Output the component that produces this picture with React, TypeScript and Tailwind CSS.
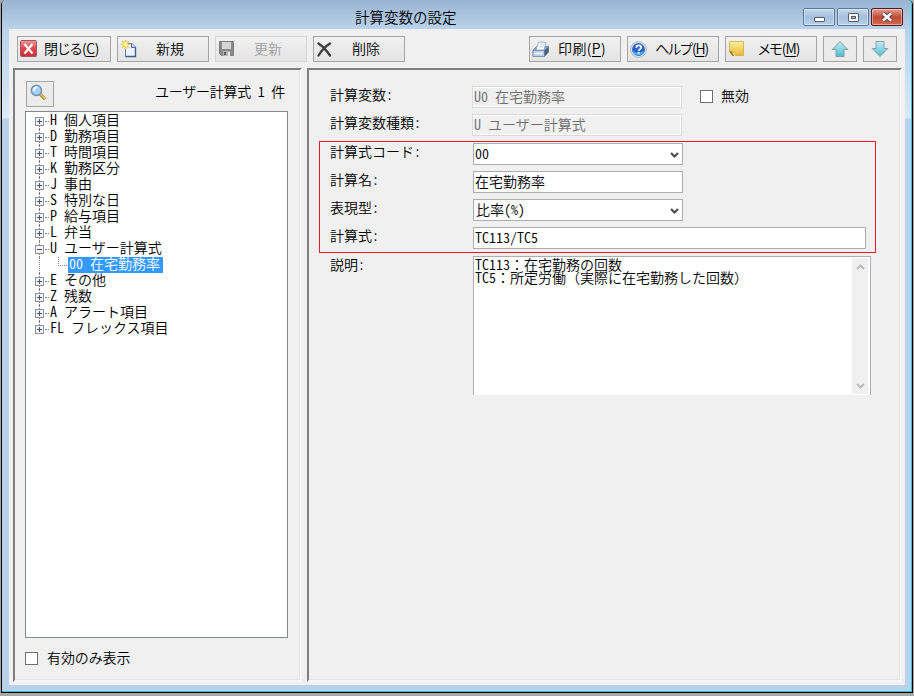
import type { ReactNode } from 'react';
import clsx from 'clsx';

interface TreeNode {
  label: string;
  open?: boolean;
  children?: string[];
}

const tree: TreeNode[] = [
  { label: 'H 個人項目' },
  { label: 'D 勤務項目' },
  { label: 'T 時間項目' },
  { label: 'K 勤務区分' },
  { label: 'J 事由' },
  { label: 'S 特別な日' },
  { label: 'P 給与項目' },
  { label: 'L 弁当' },
  { label: 'U ユーザー計算式', open: true, children: ['00 在宅勤務率'] },
  { label: 'E その他' },
  { label: 'Z 残数' },
  { label: 'A アラート項目' },
  { label: 'FL フレックス項目' },
];

function CloseIcon() {
  return (
    <svg width="18" height="18" viewBox="0 0 18 18">
      <defs>
        <linearGradient id="close" x1="0" y1="0" x2="0" y2="1">
          <stop offset="0" stopColor="#f29a94" />
          <stop offset="0.5" stopColor="#e2454a" />
          <stop offset="1" stopColor="#cf2f3c" />
        </linearGradient>
      </defs>
      <rect x="0.5" y="0.5" width="16" height="16" rx="1" fill="url(#close)" stroke="#9c5a60" />
      <path d="M4.5 4l8 9.5M12.5 4l-8 9.5" stroke="#fff" strokeWidth="2.2" />
    </svg>
  );
}

function NewIcon() {
  return (
    <svg width="18" height="18" viewBox="0 0 18 18">
      <path d="M4.5 3.5h6.500l3.500 3.500v9.500h-10z" fill="#eef4ff" stroke="#5f7cb0" />
      <path d="M10.500 3.500v4h4" fill="#c5d6f2" stroke="#48669f" />
      <path d="M14.500 7.500v9h-10" fill="none" stroke="#3f5c96" strokeWidth="1.400" />
      <path d="M4.500 0v9M0 4.500h9M1.300 1.300l6.400 6.400M7.700 1.300l-6.400 6.400" stroke="#e8c648" strokeWidth="1.500" />
      <circle cx="4.500" cy="4.500" r="2.300" fill="#fff3a0" />
    </svg>
  );
}

function SaveIcon() {
  return (
    <svg width="16" height="16" viewBox="0 0 16 16">
      <path d="M0.500 0.500h14v14h-12l-2-2z" fill="#8b8b8b" stroke="#7c7c7c" />
      <path d="M3 1h9v7h-9z" fill="#d6d6d6" />
      <path d="M4 10h7v5h-7z" fill="#b5b5b5" />
      <path d="M5 11h2v3h-2z" fill="#5f5f5f" />
      <path d="M9 11h2v4h-2z" fill="#e6e6e6" />
    </svg>
  );
}

function DeleteIcon() {
  return (
    <svg width="15" height="15" viewBox="0 0 15 15">
      <path d="M1.500 1.500q6 4 11.500 12M13 1.500q-7 4.500-11.500 12" fill="none" stroke="#3c3c3c" strokeWidth="2.300" strokeLinecap="round" />
    </svg>
  );
}

function PrintIcon() {
  return (
    <svg width="18" height="17" viewBox="0 0 18 17">
      <path d="M1 9l3.500-3.500h9l3-0.500v6l-4 4.500h-11.500z" fill="#8ba6c6" stroke="#6b86a8" strokeWidth="0.800" />
      <path d="M6.500 1l7.500 0.500-2 7.500h-8z" fill="#fafcff" stroke="#8ea0b5" strokeWidth="0.800" />
      <path d="M1 9.500h11.500v6h-11.500z" fill="#b9cee6" stroke="#7690b0" strokeWidth="0.800" />
      <path d="M12.500 9.500l4-4v5.500l-4 4.500z" fill="#46607f" />
      <path d="M2.500 12.500h8" stroke="#f4f8fd" strokeWidth="1.800" />
      <path d="M7.500 3.500h5M6.800 5.500h5" stroke="#b6c6d8" strokeWidth="0.700" />
    </svg>
  );
}

function HelpIcon() {
  return (
    <svg width="17" height="17" viewBox="0 0 17 17">
      <circle cx="8.500" cy="8.500" r="7.900" fill="#e9eef5" stroke="#a4adb8" strokeWidth="0.900" />
      <circle cx="8.500" cy="8.500" r="6.500" fill="#2b63cb" />
      <path d="M2.500 10q6 3 12 0a6.300 6.300 0 0 1-12 0z" fill="#42b2f2" />
      <path d="M6.200 6.800q0-2.500 2.500-2.500t2.500 2q0 1.200-1.300 1.900-1.100 0.600-1.100 1.800" fill="none" stroke="#fff" strokeWidth="1.700" />
      <circle cx="8.700" cy="12" r="1.100" fill="#fff" />
    </svg>
  );
}

function MemoIcon() {
  return (
    <svg width="16" height="16" viewBox="0 0 16 16">
      <defs>
        <linearGradient id="memo" x1="0" y1="0" x2="0" y2="1">
          <stop offset="0" stopColor="#fff09a" />
          <stop offset="1" stopColor="#e8b63a" />
        </linearGradient>
      </defs>
      <path d="M0.500 0.500h14v14h-11l-3-4z" fill="url(#memo)" stroke="#d6ac3c" strokeWidth="0.800" />
      <path d="M0.500 10.500l4-0.500 0.500 5h-1.500z" fill="#a8731c" />
      <path d="M4 10q-0.500 3.500 2 5" fill="none" stroke="#fff0a8" />
    </svg>
  );
}

function ArrowIcon({ down }: { down?: boolean }) {
  return (
    <svg width="18" height="18" viewBox="0 0 18 18" className={clsx(down && 'rotate-180')}>
      <defs>
        <linearGradient id={down ? 'arrow-down' : 'arrow-up'} x1="0" y1="0" x2="0" y2="1">
          <stop offset="0" stopColor={down ? '#4fbcd3' : '#c5eef4'} />
          <stop offset="1" stopColor={down ? '#c5eef4' : '#4fbcd3'} />
        </linearGradient>
      </defs>
      <path
        d="M9 1.500l7.800 8h-3.800v7h-8v-7h-3.800z"
        fill={down ? 'url(#arrow-down)' : 'url(#arrow-up)'}
        stroke="#859ea5"
        strokeLinejoin="round"
      />
    </svg>
  );
}

function SearchIcon() {
  return (
    <svg width="17" height="17" viewBox="0 0 18 18" className="mr-1 mb-1">
      <path d="M10.500 10.500l4.500 4.500" stroke="#8c7a4c" strokeWidth="3.400" strokeLinecap="round" />
      <path d="M11.500 11l3.800 3.800" stroke="#efc040" strokeWidth="2.200" strokeLinecap="round" />
      <circle cx="6.800" cy="6.800" r="5.400" fill="#a4d2f6" stroke="#6f8fb4" strokeWidth="1.500" />
      <path d="M3.800 7q0.500-3.500 4-4" fill="none" stroke="#fff" strokeWidth="2" />
    </svg>
  );
}

function Chevron({ up, className }: { up?: boolean; className?: string }) {
  return (
    <svg width="9" height="7" viewBox="0 0 9 7" className={clsx(up && 'rotate-180', className)}>
      <path d="M1 1l3.500 3.500L8 1" fill="none" stroke="currentColor" strokeWidth="2.200" />
    </svg>
  );
}

interface ToolButtonProps {
  icon: ReactNode;
  label: string;
  accessKey?: string;
  disabled?: boolean;
  className: string;
  labelClass: string;
}

function ToolButton({ icon, label, accessKey, disabled, className, labelClass }: ToolButtonProps) {
  return (
    <button
      className={clsx(
        'flex h-[26px] shrink-0 items-center border bg-linear-to-b from-[#f1f1f1] to-[#e4e4e4] text-[14px] whitespace-nowrap',
        disabled ? 'border-[#d5d5d5] text-[#a0a0a0]' : 'border-[#a5a5a5]',
        className,
      )}
    >
      <span className="flex w-[18px] shrink-0 justify-start">{icon}</span>
      <span className={clsx("pb-[3px] leading-none [font-feature-settings:'palt']", labelClass)}>
        {label}
        {accessKey && (
          <>
            (<span className="underline underline-offset-2">{accessKey}</span>)
          </>
        )}
      </span>
    </button>
  );
}

function Expander({ open }: { open?: boolean }) {
  return (
    <svg width="9" height="9" viewBox="0 0 9 9" shapeRendering="crispEdges">
      <rect x="0.500" y="0.500" width="8" height="8" fill="#f4f4f4" stroke="#919191" />
      <path d={open ? 'M2 4.500h5' : 'M2 4.500h5M4.500 2v5'} stroke="#3b56a0" />
    </svg>
  );
}

function TreeRow({ node, first, last }: { node: TreeNode; first?: boolean; last?: boolean }) {
  return (
    <>
      <li className="flex h-4 items-start">
        <div className="flex w-[9px] shrink-0 flex-col items-center">
          <span className={clsx('h-1 border-l border-dotted', first ? 'border-transparent' : 'border-[#808080]')} />
          <Expander open={node.open} />
          <span className={clsx('h-[3px] border-l border-dotted', last ? 'border-transparent' : 'border-[#808080]')} />
        </div>
        <span className="mt-2 ml-px w-[4px] border-t border-dotted border-[#808080]" />
        <span className="ml-px leading-[13px] whitespace-pre">{node.label}</span>
      </li>
      {node.children?.map((child) => (
        <li key={child} className="flex h-4">
          <span className="ml-1 w-[19px] border-l border-dotted border-[#808080]" />
          <span className="mr-[1px] h-[9px] w-[9px] border-b border-l border-dotted border-[#808080]" />
          <span className="w-[95px] bg-[#3399ff] pl-px leading-[13px] whitespace-pre text-white">{child}</span>
        </li>
      ))}
    </>
  );
}

function Checkbox() {
  return <span className="size-[13px] shrink-0 border border-[#707070] bg-white" />;
}

function FormRow({ label, children }: { label: string; children: ReactNode }) {
  return (
    <div className="flex h-[22px]">
      <span className="w-[143px] shrink-0 leading-[17px] whitespace-pre">{label}</span>
      {children}
    </div>
  );
}

function Field({ value, variant = 'text', wide }: { value: string; variant?: 'text' | 'select' | 'disabled'; wide?: boolean }) {
  return (
    <div
      className={clsx(
        'flex items-start justify-between border pl-px leading-[18px] whitespace-pre',
        wide ? 'w-[393px]' : 'w-[210px]',
        variant === 'disabled'
          ? '-ml-px border-[#d9d9d9] text-[#6d6d6d] shadow-[inset_0_0_0_1px_#fff]'
          : 'border-[#abadb3] bg-white',
      )}
    >
      <span className={clsx(variant === 'select' && value !== '00' && 'pl-px')}>{value}</span>
      {variant === 'select' && <Chevron className="mt-2 mr-[3px] text-[#505050]" />}
    </div>
  );
}

const windowButton = 'flex h-[18px] w-8 items-center justify-center rounded-[2px] border shadow-[inset_0_0_0_1px_#ffffff66]';
const panel =
  'border-2 border-t-[#808080] border-l-[#808080] border-r-[#f7f7f7] border-b-[#f7f7f7] shadow-[inset_-1px_-1px_0_#e3e3e3]';

export default function App() {
  return (
    <div className="flex h-[696px] w-[914px] bg-[#a8a8a8] px-px pb-[3px] font-['Noto_Sans_CJK_JP',sans-serif] text-[14px] [font-weight:350] text-black">
      <div className="flex w-full flex-col rounded-t-[5px] border-x border-b border-black bg-[#b9d1ea]">
        <div className="flex flex-1 flex-col rounded-t-[4px] border-r border-b border-[#35c0dc] bg-[linear-gradient(#99b4d1,#b9d1ea_28px,#dce9f6_118px,#b9d1ea_119px)]">
          <header className="flex h-[29px] shrink-0 items-start justify-end pr-2">
            <h1 className="flex-1 pt-[5px] pl-[353px] text-[14.5px] leading-6">計算変数の設定</h1>
            <div className="flex gap-0.5 pt-2">
              <button className={clsx(windowButton, 'border-[#5c7896] bg-linear-to-b from-[#c4d7eb] via-[#a5c0dd] via-50% to-[#b9d1ea]')}>
                <span className="mt-1 h-[5px] w-[11px] rounded-[1px] border border-[#555b68] bg-white" />
              </button>
              <button className={clsx(windowButton, 'border-[#5c7896] bg-linear-to-b from-[#c4d7eb] via-[#a5c0dd] via-50% to-[#b9d1ea]')}>
                <svg width="11" height="9" viewBox="0 0 11 9">
                  <rect x="0.500" y="0.500" width="10" height="8" rx="0.500" fill="#fff" stroke="#555b68" />
                  <rect x="3.500" y="3.500" width="4" height="2" fill="#a5c0dd" stroke="#555b68" />
                </svg>
              </button>
              <button className={clsx(windowButton, 'border-[#5c1820] bg-linear-to-b from-[#e3a093] via-[#c14a35] via-50% to-[#cf6a4e]')}>
                <svg width="12" height="10" viewBox="0 0 12 10">
                  <path d="M2 1.500l8 7M10 1.500l-8 7" stroke="#55404a" strokeWidth="4.400" />
                  <path d="M2 1.500l8 7M10 1.500l-8 7" stroke="#fff" strokeWidth="2.400" />
                </svg>
              </button>
            </div>
          </header>

          <main className="mr-1.5 mb-1.5 ml-[7px] flex flex-1 flex-col bg-[#f0f0f0]">
            <div className="flex gap-1.5 pt-[7px] pl-2">
              <ToolButton icon={<CloseIcon />} label="閉じる" accessKey="C" className="w-[94px] pl-0.5" labelClass="ml-[6px] tracking-[-0.3px]" />
              <ToolButton icon={<NewIcon />} label="新規" className="w-[92px] pl-[3px]" labelClass="ml-[17px]" />
              <ToolButton icon={<SaveIcon />} label="更新" disabled className="w-[92px] pl-[3px]" labelClass="ml-[17px]" />
              <ToolButton icon={<DeleteIcon />} label="削除" className="mr-[118px] w-[92px] pl-[3px]" labelClass="ml-[17px]" />
              <ToolButton icon={<PrintIcon />} label="印刷" accessKey="P" className="w-[92px] pl-0.5" labelClass="ml-[8px] tracking-[0.4px]" />
              <ToolButton icon={<HelpIcon />} label="ヘルプ" accessKey="H" className="w-[92px] pl-0.5" labelClass="ml-[7px] tracking-[-1.1px]" />
              <ToolButton icon={<MemoIcon />} label="メモ" accessKey="M" className="w-[92px] pl-[3px]" labelClass="ml-[11px] tracking-[-0.9px]" />
              <button className="flex h-[26px] w-[34px] items-center justify-center border border-[#a5a5a5] bg-[#ebebeb]">
                <ArrowIcon />
              </button>
              <button className="flex h-[26px] w-[34px] items-center justify-center border border-[#a5a5a5] bg-[#ebebeb]">
                <ArrowIcon down />
              </button>
            </div>

            <div className="mt-1.5 flex h-[614px] gap-[5px] pl-1 [font-feature-settings:'hwid']">
              <aside className={clsx(panel, 'flex w-[289px] shrink-0 flex-col pt-[11px] pl-2.5')}>
                <div className="ml-px flex h-[26px] items-start">
                  <button className="flex h-[26px] w-7 items-center justify-center border border-[#a5a5a5] bg-[#ebebeb]">
                    <SearchIcon />
                  </button>
                  <span className="ml-[101px] leading-5 tracking-[-0.25px] whitespace-pre">ユーザー計算式 1 件</span>
                </div>
                <ul className="mt-1 h-[527px] w-[263px] border border-[#828790] bg-white pt-px pl-[9px]">
                  {tree.map((node, i) => (
                    <TreeRow key={node.label} node={node} first={i === 0} last={i === tree.length - 1} />
                  ))}
                </ul>
                <label className="mt-[11px] flex h-[19px] items-center gap-[9px]">
                  <Checkbox />
                  <span className="pb-0.5 tracking-[-0.1px] [font-feature-settings:normal]">有効のみ表示</span>
                </label>
              </aside>

              <section className={clsx(panel, 'relative flex w-[595px] shrink-0 flex-col gap-1.5 pt-4 pl-[21px]')}>
                <FormRow label="計算変数:">
                  <Field value="U0 在宅勤務率" variant="disabled" />
                  <label className="ml-[18px] flex h-[21px] items-center gap-2">
                    <Checkbox />
                    <span className="pb-0.5">無効</span>
                  </label>
                </FormRow>
                <FormRow label="計算変数種類:">
                  <Field value="U ユーザー計算式" variant="disabled" />
                </FormRow>
                <div className="mt-px flex flex-col gap-1.5">
                  <FormRow label="計算式コード:">
                    <Field value="00" variant="select" />
                  </FormRow>
                  <FormRow label="計算名:">
                    <Field value="在宅勤務率" />
                  </FormRow>
                  <FormRow label="表現型:">
                    <Field value="比率(%)" variant="select" />
                  </FormRow>
                  <FormRow label="計算式:">
                    <Field value="TC113/TC5" wide />
                  </FormRow>
                </div>
                <div className="mt-px flex">
                  <span className="w-[143px] shrink-0 leading-[17px]">説明:</span>
                  <div className="flex h-[139px] w-[398px] justify-between border border-b-0 border-[#abadb3] bg-white p-px">
                    <div className="leading-[13px] whitespace-pre">
                      <p>
                        TC113<span className="[font-feature-settings:normal]">：在宅勤務の回数</span>
                      </p>
                      <p>
                        TC5<span className="[font-feature-settings:normal]">：所定労働（実際に在宅勤務した回数）</span>
                      </p>
                    </div>
                    <div className="mr-px flex w-4 flex-col items-center justify-between bg-[#f0f0f0] pt-[5px] pb-1 text-[#bdbdbd]">
                      <Chevron up />
                      <Chevron />
                    </div>
                  </div>
                </div>
                {/* highlighted input group */}
                <div className="pointer-events-none absolute top-[71px] left-[10px] h-[112px] w-[557px] border border-[#ed1c24]" />
              </section>
            </div>
          </main>
        </div>
      </div>
    </div>
  );
}
